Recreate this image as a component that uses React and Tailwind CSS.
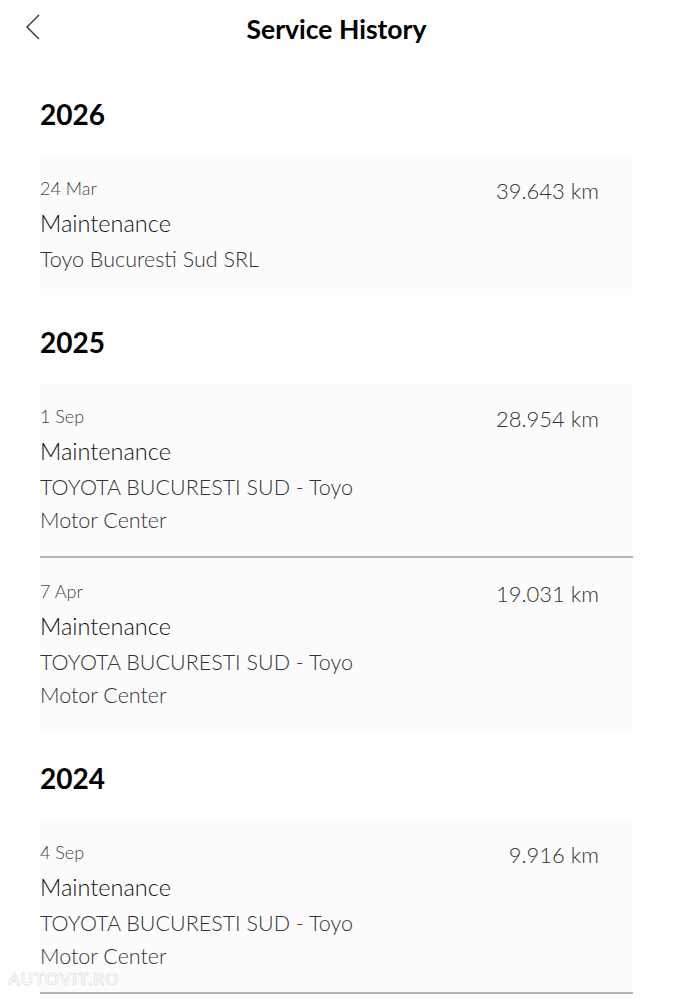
const groups = [
  {
    year: '2026',
    items: [{ date: '24 Mar', type: 'Maintenance', place: 'Toyo Bucuresti Sud SRL', km: '39.643 km' }],
  },
  {
    year: '2025',
    items: [
      { date: '1 Sep', type: 'Maintenance', place: 'TOYOTA BUCURESTI SUD - Toyo Motor Center', km: '28.954 km' },
      { date: '7 Apr', type: 'Maintenance', place: 'TOYOTA BUCURESTI SUD - Toyo Motor Center', km: '19.031 km' },
    ],
  },
  {
    year: '2024',
    items: [
      { date: '4 Sep', type: 'Maintenance', place: 'TOYOTA BUCURESTI SUD - Toyo Motor Center', km: '9.916 km', last: true },
    ],
  },
]

function Entry({ item, divider }) {
  return (
    <div
      className={`flex justify-between bg-[#fcfcfc] pb-[19px] pr-[34px] pt-[22px] ${
        divider ? 'border-b-2 border-[#b4b4b4]' : ''
      }`}
    >
      <div className="w-[360px]">
        <div className="text-[18px] leading-[22px] text-[#444]">{item.date}</div>
        <div className="mt-[10px] text-[23.5px] leading-[28px] text-[#111]">{item.type}</div>
        <div className="mt-[6px] text-[21.5px] leading-[33px] text-[#333]">{item.place}</div>
      </div>
      <div className="text-[22px] leading-[28px] text-[#333]">{item.km}</div>
    </div>
  )
}

export default function App() {
  return (
    <div className="relative min-h-[999px] w-[673px] overflow-hidden bg-white font-['Lato',sans-serif] font-light">
      <header className="grid h-[67px] grid-cols-[1fr_auto_1fr] items-start pt-[12px]">
        <button className="ml-[25px] flex h-[30px] w-[20px] items-center">
          <svg width="16" height="28" viewBox="0 0 16 28" fill="none">
            <path d="M14 2 L2 14 L14 26" stroke="#333" strokeWidth="1.4" />
          </svg>
        </button>
        <h1 className="text-[26.5px] font-bold leading-[34px] text-black">Service History</h1>
        <div />
      </header>

      <main className="px-[40px]">
        {groups.map((group) => (
          <section key={group.year}>
            <h2 className="pb-[23px] pt-[29px] text-[28px] font-bold leading-[36px] text-black">{group.year}</h2>
            {group.items.map((item, i) => (
              <Entry key={item.date} item={item} divider={i < group.items.length - 1 || item.last} />
            ))}
          </section>
        ))}
      </main>

      <div className="absolute bottom-[10px] left-[8px] text-[17px] font-bold leading-[20px] tracking-[1px] text-white/70 [-webkit-text-stroke:0.6px_#d8d8d8]">
        AUTOVIT.RO
      </div>
    </div>
  )
}
